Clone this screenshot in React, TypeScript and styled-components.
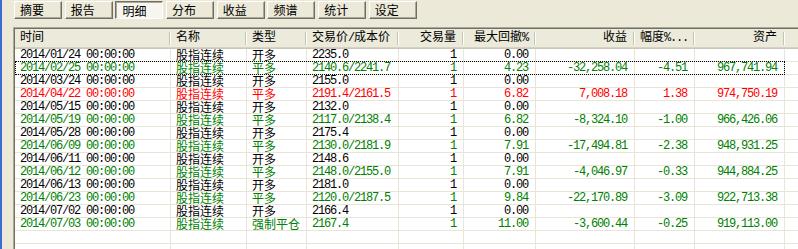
import React from "react";
import styled, { createGlobalStyle, css } from "styled-components";

const GlobalStyle = createGlobalStyle`
  html, body {
    margin: 0;
    padding: 0;
    background: #ece9d8;
  }
  body {
    width: 798px;
    height: 249px;
    overflow: hidden;
    font-family: "Liberation Mono", "Noto Sans CJK SC", monospace;
    font-size: 12px;
  }
`;

type Tone = "black" | "green" | "red";

const toneColor: Record<Tone, string> = {
  black: "#000000",
  green: "#008000",
  red: "#ff0000",
};

const COLS = "156px 76px 60px 92px 65px 72px 99px 60px 90px 1fr";
const GRID = "#e9e5d6";

const Frame = styled.div`
  display: flex;
  height: 249px;
`;

const WindowEdge = styled.div`
  flex: none;
  width: 2px;
  background: #3b6bd3;
`;

const Panel = styled.div`
  flex: 1;
  min-width: 0;
  display: flex;
  flex-direction: column;
  padding: 1px 0 0 11px;
`;

const Toolbar = styled.div`
  display: flex;
  gap: 2.7px;
  margin-left: 1px;
  height: 18px;
`;

const TabButton = styled.button<{ $active?: boolean }>`
  box-sizing: border-box;
  width: 48px;
  height: 18px;
  margin: 0;
  padding: 0 0 0 5px;
  text-align: left;
  font: 12px/16px "Noto Sans CJK SC", sans-serif;
  color: #000;
  background: #ece9d8;
  border: 1px solid;
  border-color: #fff #716f64 #716f64 #fff;
  box-shadow: inset -1px -1px #aca899;
  ${p =>
    p.$active &&
    css`
      padding: 1px 0 0 6px;
      background: #f6f5ef;
      border-color: #716f64 #fff #fff #716f64;
      box-shadow: inset 1px 1px #aca899;
    `}
`;

const Table = styled.div`
  flex: 1;
  margin-top: 8px;
  overflow: hidden;
  background: #fff;
  border-top: 1px solid #aca899;
  border-left: 1px solid #aca899;
  box-shadow: inset 1px 1px #716f64;
  padding: 1px 0 0 1px;
`;

const HeadRow = styled.div`
  display: grid;
  grid-template-columns: ${COLS};
  height: 20px;
  background: #ebeadb;
  box-shadow: inset 0 -1px #cbc7b8, inset 0 -2px #d6d2c2;
`;

const HeadCell = styled.div<{ $right?: boolean; $last?: boolean }>`
  position: relative;
  padding: 0 8px 0 5px;
  line-height: 19px;
  white-space: nowrap;
  letter-spacing: -1.2px;
  text-align: ${p => (p.$right ? "right" : "left")};
  &::after {
    content: "";
    display: ${p => (p.$last ? "none" : "block")};
    position: absolute;
    right: 1px;
    top: 3px;
    bottom: 4px;
    width: 1px;
    background: #c7c5b2;
    box-shadow: 1px 0 #fff;
  }
`;

const Row = styled.div<{ $tone: Tone; $focus?: boolean }>`
  position: relative;
  display: grid;
  grid-template-columns: ${COLS};
  box-sizing: border-box;
  height: 13px;
  border-bottom: 1px solid ${GRID};
  color: ${p => toneColor[p.$tone]};
  ${p =>
    p.$focus &&
    css`
      &::after {
        content: "";
        position: absolute;
        left: 0;
        top: -1px;
        width: 770px;
        height: 14px;
        box-sizing: border-box;
        border: 1px dotted #000;
        pointer-events: none;
      }
    `}
`;

const Cell = styled.div<{ $right?: boolean; $last?: boolean }>`
  padding: 0 7px 0 5px;
  height: 12px;
  line-height: 12px;
  white-space: nowrap;
  letter-spacing: -1.2px;
  text-align: ${p => (p.$right ? "right" : "left")};
  border-right: ${p => (p.$last ? "none" : `1px solid ${GRID}`)};
`;

const Han = styled.span`
  font-family: "Noto Sans CJK SC", sans-serif;
  line-height: 12px;
  letter-spacing: 0;
`;

const Txt = ({ s }: { s: string }) => (
  <>
    {s.split(/([\u4e00-\u9fff]+)/).map((part, i) =>
      /[\u4e00-\u9fff]/.test(part) ? <Han key={i}>{part}</Han> : part
    )}
  </>
);

const tabs = ["摘要", "报告", "明细", "分布", "收益", "频谱", "统计", "设定"];

const headers: { label: string; right?: boolean }[] = [
  { label: "时间" },
  { label: "名称" },
  { label: "类型" },
  { label: "交易价/成本价" },
  { label: "交易量", right: true },
  { label: "最大回撤%", right: true },
  { label: "收益", right: true },
  { label: "幅度%...", right: true },
  { label: "资产", right: true },
];

type Trade = [string, string, string, string, string, string, string, Tone];

const trades: Trade[] = [
  ["2014/01/24", "开多", "2235.0", "0.00", "", "", "", "black"],
  ["2014/02/25", "平多", "2140.6/2241.7", "4.23", "-32,258.04", "-4.51", "967,741.94", "green"],
  ["2014/03/24", "开多", "2155.0", "0.00", "", "", "", "black"],
  ["2014/04/22", "平多", "2191.4/2161.5", "6.82", "7,008.18", "1.38", "974,750.19", "red"],
  ["2014/05/15", "开多", "2132.0", "0.00", "", "", "", "black"],
  ["2014/05/19", "平多", "2117.0/2138.4", "6.82", "-8,324.10", "-1.00", "966,426.06", "green"],
  ["2014/05/28", "开多", "2175.4", "0.00", "", "", "", "black"],
  ["2014/06/09", "平多", "2130.0/2181.9", "7.91", "-17,494.81", "-2.38", "948,931.25", "green"],
  ["2014/06/11", "开多", "2148.6", "0.00", "", "", "", "black"],
  ["2014/06/12", "平多", "2148.0/2155.0", "7.91", "-4,046.97", "-0.33", "944,884.25", "green"],
  ["2014/06/13", "开多", "2181.0", "0.00", "", "", "", "black"],
  ["2014/06/23", "平多", "2120.0/2187.5", "9.84", "-22,170.89", "-3.09", "922,713.38", "green"],
  ["2014/07/02", "开多", "2166.4", "0.00", "", "", "", "black"],
  ["2014/07/03", "强制平仓", "2167.4", "11.00", "-3,600.44", "-0.25", "919,113.00", "green"],
];

export default function App() {
  return (
    <>
      <GlobalStyle />
      <Frame>
        <WindowEdge />
        <Panel>
          <Toolbar>
            {tabs.map(t => (
              <TabButton key={t} $active={t === "明细"}>
                {t}
              </TabButton>
            ))}
          </Toolbar>
          <Table>
            <HeadRow>
              {headers.map(h => (
                <HeadCell key={h.label} $right={h.right}>
                  <Txt s={h.label} />
                </HeadCell>
              ))}
              <HeadCell $last />
            </HeadRow>
            {trades.map(([date, kind, price, dd, profit, pct, asset, tone], i) => (
              <Row key={date} $tone={tone} $focus={i === 1}>
                <Cell>{date} 00:00:00</Cell>
                <Cell>
                  <Txt s="股指连续" />
                </Cell>
                <Cell>
                  <Txt s={kind} />
                </Cell>
                <Cell>{price}</Cell>
                <Cell $right>1</Cell>
                <Cell $right>{dd}</Cell>
                <Cell $right>{profit}</Cell>
                <Cell $right>{pct}</Cell>
                <Cell $right>{asset}</Cell>
                <Cell $last />
              </Row>
            ))}
            {[0, 1].map(i => (
              <Row key={`empty-${i}`} $tone="black">
                {headers.map(h => (
                  <Cell key={h.label} />
                ))}
                <Cell $last />
              </Row>
            ))}
          </Table>
        </Panel>
      </Frame>
    </>
  );
}
